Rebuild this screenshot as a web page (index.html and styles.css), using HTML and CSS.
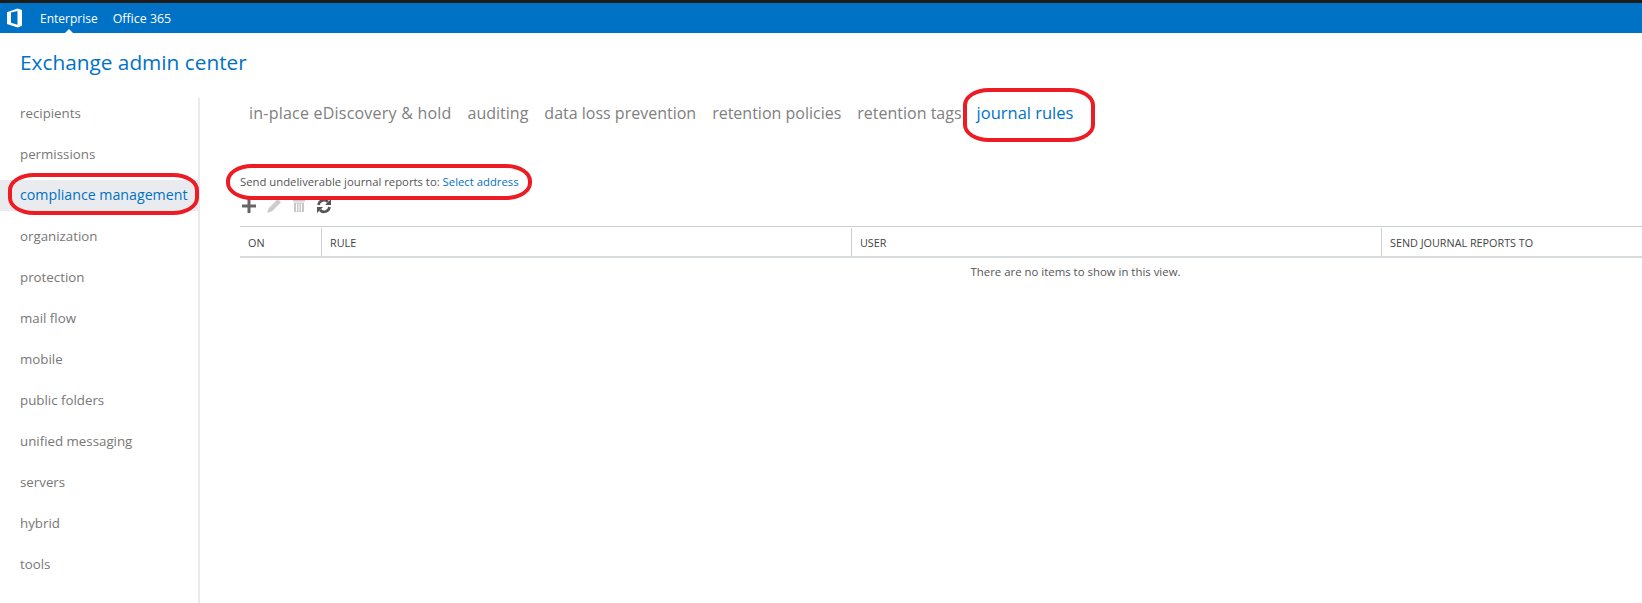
FILE: index.html
```html
<!DOCTYPE html>
<html lang="en">
<head>
<meta charset="utf-8">
<title>Exchange admin center</title>
<link rel="stylesheet" href="styles.css">
</head>
<body>
<header class="topbar">
  <svg class="logo" width="18" height="20" viewBox="0 0 18 20"><path fill="#fff" d="M1 4.200 11.500 .6 16 2v15.800L11.500 19.400 1 16Zm10.500-1.200L5 4.600v10.200l6.500 1.900Z"/><path fill="#fff" d="M1 4.200 5 4.600v10.200L1 16Z"/></svg>
  <a class="topbar-link current">Enterprise</a>
  <a class="topbar-link">Office 365</a>
</header>
<h1 class="title">Exchange admin center</h1>
<div class="main">
  <nav class="sidebar">
    <a class="nav-item">recipients</a>
    <a class="nav-item">permissions</a>
    <a class="nav-item active">compliance management</a>
    <a class="nav-item">organization</a>
    <a class="nav-item">protection</a>
    <a class="nav-item">mail flow</a>
    <a class="nav-item">mobile</a>
    <a class="nav-item">public folders</a>
    <a class="nav-item">unified messaging</a>
    <a class="nav-item">servers</a>
    <a class="nav-item">hybrid</a>
    <a class="nav-item">tools</a>
  </nav>
  <section class="content">
    <div class="tabs">
      <a class="tab first">in-place eDiscovery &amp; hold</a>
      <a class="tab">auditing</a>
      <a class="tab">data loss prevention</a>
      <a class="tab">retention policies</a>
      <a class="tab">retention tags</a>
      <a class="tab active">journal rules</a>
    </div>
    <p class="notice">Send undeliverable journal reports to: <a class="link">Select address</a></p>
    <div class="toolbar">
      <svg width="16" height="16" viewBox="0 0 16 16"><path fill="#666" d="M6.500 1h3v5.500H15v3H9.500V15h-3V9.500H1v-3h5.500Z"/></svg>
      <svg width="16" height="16" viewBox="0 0 17 17"><path fill="#ccc" d="M12.500 1 16 4.500 6.500 14 1 16l2-5.500Z"/></svg>
      <svg width="16" height="14" viewBox="-1 0 16 14"><path fill="#c8c8c8" d="M1 1h12v1.500H1ZM2 3.500h10V13H2Z"/><path stroke="#fff" d="M4.500 4.500v8M7 4.500v8M9.500 4.500v8"/></svg>
      <svg width="16" height="16" viewBox="0 0 16 16"><path fill="none" stroke="#555" stroke-width="2.600" d="M2.500 7a5.500 5.500 0 0 1 9.500-3M13.500 9a5.500 5.500 0 0 1-9.500 3"/><path fill="#555" d="M15 1v6H9ZM1 15V9h6Z"/></svg>
    </div>
    <div class="table">
      <div class="row head">
        <div class="cell on">ON</div>
        <div class="cell">RULE</div>
        <div class="cell">USER</div>
        <div class="cell">SEND JOURNAL REPORTS TO</div>
      </div>
      <div class="empty">There are no items to show in this view.</div>
    </div>
  </section>
</div>
<div class="mark mark-nav"></div>
<div class="mark mark-tab"></div>
<div class="mark mark-notice"></div>
</body>
</html>
```
FILE: styles.css
```css
* { box-sizing: border-box; }
html, body { height: 100%; }
body {
  margin: 0;
  height: 603px;
  overflow: hidden;
  position: relative;
  background: #fff;
  color: #666;
  font-family: "Open Sans", "Noto Sans", "Liberation Sans", sans-serif;
  border-top: 3px solid #1c1c1c;
}
.topbar {
  height: 30px;
  background: #0072c6;
  display: flex;
  align-items: center;
  padding-left: 6px;
  position: relative;
}
.logo { margin-right: 16px; }
.topbar-link {
  color: #fff;
  font-size: 12px;
  margin-right: 15px;
  position: relative;
  height: 100%;
  display: flex;
  align-items: center;
}
.topbar-link:last-child { font-size: 12.400px; }
.topbar-link.current::after {
  content: "";
  position: absolute;
  left: 50%;
  bottom: 0;
  margin-left: -4px;
  border: 4px solid transparent;
  border-top: 0;
  border-bottom-color: #fff;
}
.title {
  margin: 0;
  height: 65px;
  padding: 14px 0 0 20px;
  font-size: 20.800px;
  font-weight: 400;
  line-height: 30px;
  color: #0072c6;
}
.main { display: flex; }
.sidebar {
  width: 200px;
  height: 510px;
  flex: none;
  border-right: 2px solid #eaeaea;
  display: flex;
  flex-direction: column;
  padding-top: 0;
  margin-top: 0;
}
.nav-item {
  height: 41px;
  flex: none;
  display: flex;
  align-items: center;
  padding-left: 20px;
  font-size: 13.300px;
  color: #777;
  position: relative;
  top: -6px;
}
.nav-item.active {
  color: #0072c6;
  font-size: 14.200px;
  background: linear-gradient(#fff 6px, #e9ebee 6px, #e9ebee 37px, #fff 37px);
}
.content { flex: 1; min-width: 0; }
.tabs {
  height: 29px;
  padding-left: 49px;
  display: flex;
  gap: 16px;
  align-items: center;
}
.tab { font-size: 16px; color: #808080; white-space: nowrap; }
.tab.first { letter-spacing: .22px; }
.tab.active { color: #0072c6; font-size: 16.500px; margin-left: -1px; }
.notice {
  margin: 47px 0 0 40px;
  font-size: 11.300px;
  line-height: 16px;
  color: #555;
}
.link { color: #0072c6; }
.toolbar {
  margin: 6px 0 0 41px;
  height: 19px;
  display: flex;
  align-items: center;
  gap: 9px;
}
.table {
  margin-left: 40px;
  width: 1671px;
  margin-top: 11px;
}
.row.head {
  display: grid;
  grid-template-columns: 81px 530px 530px 530px;
  height: 32px;
  border-top: 1px solid #c8cdd1;
  border-bottom: 2px solid #d8dcdf;
}
.cell {
  font-size: 10.800px;
  color: #444;
  padding-left: 8px;
  display: flex;
  align-items: center;
  border-left: 1px solid #cfcfcf;
  margin-top: 1px;
}
.cell.on { border-left: 0; padding-left: 8px; }
.empty {
  text-align: center;
  font-size: 11.400px;
  color: #555;
  margin-top: 6px;
  line-height: 16px;
}
.mark {
  position: absolute;
  border: 4px solid #ed1c24;
  border-radius: 26px / 17px;
}
.mark-nav { left: 8px; top: 170px; width: 191px; height: 42px; }
.mark-tab { left: 963px; top: 85px; width: 132px; height: 54px; }
.mark-notice { left: 226px; top: 161px; width: 306px; height: 36px; }
```
